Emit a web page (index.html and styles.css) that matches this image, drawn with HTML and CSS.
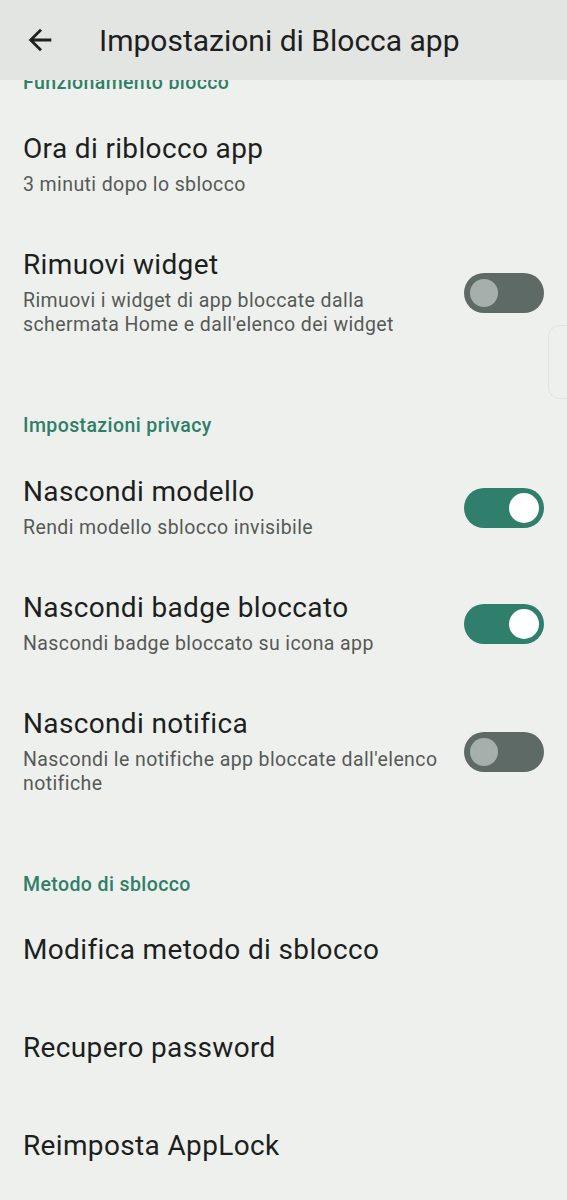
FILE: index.html
```html
<html lang="it">
<head>
  <title>Impostazioni di Blocca app</title>
  <link rel="stylesheet" href="styles.css">
</head>
<body>
<header class="appbar">
  <svg class="back" viewBox="0 0 24 24" width="34" height="34">
    <path d="M20 11H7.83l5.59-5.59L12 4l-8 8 8 8 1.41-1.41L7.83 13H20v-2z" fill="#1f1f1f"/>
  </svg>
  <h1>Impostazioni di Blocca app</h1>
</header>

<main class="list">
  <h2 class="subhead first">Funzionamento blocco</h2>

  <div class="row">
    <div class="text">
      <div class="title">Ora di riblocco app</div>
      <div class="sub">3 minuti dopo lo sblocco</div>
    </div>
  </div>

  <div class="row">
    <div class="text">
      <div class="title">Rimuovi widget</div>
      <div class="sub">Rimuovi i widget di app bloccate dalla schermata Home e dall'elenco dei widget</div>
    </div>
    <span class="switch"></span>
  </div>

  <h2 class="subhead">Impostazioni privacy</h2>

  <div class="row">
    <div class="text">
      <div class="title">Nascondi modello</div>
      <div class="sub">Rendi modello sblocco invisibile</div>
    </div>
    <span class="switch on"></span>
  </div>

  <div class="row">
    <div class="text">
      <div class="title">Nascondi badge bloccato</div>
      <div class="sub">Nascondi badge bloccato su icona app</div>
    </div>
    <span class="switch on"></span>
  </div>

  <div class="row">
    <div class="text">
      <div class="title">Nascondi notifica</div>
      <div class="sub">Nascondi le notifiche app bloccate dall'elenco notifiche</div>
    </div>
    <span class="switch"></span>
  </div>

  <h2 class="subhead">Metodo di sblocco</h2>

  <div class="row single">
    <div class="title">Modifica metodo di sblocco</div>
  </div>
  <div class="row single">
    <div class="title">Recupero password</div>
  </div>
  <div class="row single">
    <div class="title">Reimposta AppLock</div>
  </div>
</main>

<div class="edge-handle"></div>
</body>
</html>
```

FILE: styles.css
```css
html {
    margin: 0;
    padding: 0;
}

body {
    margin: 0;
    background: #eef0ed;
    font-family: Roboto, "Noto Sans", sans-serif;
    color: #1d1f1e;
    overflow: hidden;
}

.appbar {
    position: relative;
    z-index: 1;
    height: 80px;
    display: flex;
    align-items: center;
    background: #e3e5e2;
}

.back {
    margin-left: 23px;
    margin-right: 42px;
}

.appbar h1 {
    margin: 0;
    font-size: 30px;
    font-weight: 400;
    color: #1d1f1e;
}

.list {
    margin-top: -9px;
}

.subhead {
    margin: 0;
    padding: 52px 23px 11px;
    font-size: 19.5px;
    letter-spacing: .4px;
    line-height: 24px;
    font-weight: 500;
    color: #2f7f68;
}

.subhead.first {
    padding-top: 0;
}

.row {
    display: flex;
    align-items: center;
    padding: 27px 23px 25px;
}

.row.single {
    padding: 26px 23px 40px;
}

.text {
    flex: 1;
    max-width: 422px;
}

.title {
    font-size: 28px;
    letter-spacing: .35px;
    line-height: 32px;
}

.sub {
    margin-top: 8px;
    font-size: 19.5px;
    letter-spacing: .4px;
    line-height: 24px;
    color: #555a57;
}

.switch {
    margin-left: auto;
    width: 80px;
    height: 40px;
    border-radius: 20px;
    background: #5e6a66;
    display: flex;
    align-items: center;
    padding: 0 6px;
    box-sizing: border-box;
    flex-shrink: 0;
}

.switch::before {
    content: "";
    width: 28px;
    height: 28px;
    border-radius: 50%;
    background: #a5afab;
}

.switch.on {
    background: #2f7f6c;
    justify-content: flex-end;
    padding: 0 5px;
}

.switch.on::before {
    width: 30px;
    height: 30px;
    background: #fff;
}

.edge-handle {
    position: absolute;
    top: 325px;
    right: 0;
    width: 18px;
    height: 72px;
    border: 1.5px solid #e1e3e0;
    border-right: 0;
    border-radius: 12px 0 0 12px;
}
```
